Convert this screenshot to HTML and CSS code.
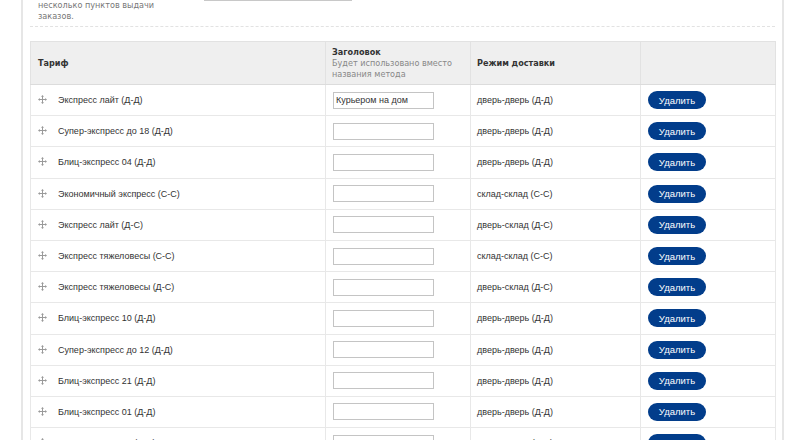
FILE: index.html
```html
<!DOCTYPE html>
<html lang="ru">
<head>
<meta charset="utf-8">
<title>Тарифы</title>
<link rel="stylesheet" href="styles.css">
</head>
<body>
<div class="panel">
  <div class="field-row">
    <div class="field-label">несколько пунктов выдачи<br>заказов.</div>
    <div class="field-control"><input class="top-input" type="text"></div>
  </div>
  <table class="tariffs">
    <colgroup>
      <col class="c1"><col class="c2"><col class="c3"><col class="c4">
    </colgroup>
    <thead>
      <tr>
        <th class="th-name">Тариф</th>
        <th class="th-title">Заголовок<span class="hint">Будет использовано вместо названия метода</span></th>
        <th class="th-mode">Режим доставки</th>
        <th class="th-act"></th>
      </tr>
    </thead>
    <tbody id="rows">
      <tr><td class="name"><span class="drag"><svg viewBox="0 0 9 9"><path d="M4.5 1v7M1 4.5h7"/><path class="hd" d="M4.5 0L3 1.8h3zM4.5 9L3 7.2h3zM0 4.5L1.8 3v3zM9 4.5L7.2 3v3z"/></svg></span>Экспресс лайт (Д-Д)</td><td class="title"><input class="cell-input" type="text" value="Курьером на дом"></td><td class="mode">дверь-дверь (Д-Д)</td><td class="act"><button class="del">Удалить</button></td></tr>
      <tr><td class="name"><span class="drag"><svg viewBox="0 0 9 9"><path d="M4.5 1v7M1 4.5h7"/><path class="hd" d="M4.5 0L3 1.8h3zM4.5 9L3 7.2h3zM0 4.5L1.8 3v3zM9 4.5L7.2 3v3z"/></svg></span>Супер-экспресс до 18 (Д-Д)</td><td class="title"><input class="cell-input" type="text"></td><td class="mode">дверь-дверь (Д-Д)</td><td class="act"><button class="del">Удалить</button></td></tr>
      <tr><td class="name"><span class="drag"><svg viewBox="0 0 9 9"><path d="M4.5 1v7M1 4.5h7"/><path class="hd" d="M4.5 0L3 1.8h3zM4.5 9L3 7.2h3zM0 4.5L1.8 3v3zM9 4.5L7.2 3v3z"/></svg></span>Блиц-экспресс 04 (Д-Д)</td><td class="title"><input class="cell-input" type="text"></td><td class="mode">дверь-дверь (Д-Д)</td><td class="act"><button class="del">Удалить</button></td></tr>
      <tr><td class="name"><span class="drag"><svg viewBox="0 0 9 9"><path d="M4.5 1v7M1 4.5h7"/><path class="hd" d="M4.5 0L3 1.8h3zM4.5 9L3 7.2h3zM0 4.5L1.8 3v3zM9 4.5L7.2 3v3z"/></svg></span>Экономичный экспресс (С-С)</td><td class="title"><input class="cell-input" type="text"></td><td class="mode">склад-склад (С-С)</td><td class="act"><button class="del">Удалить</button></td></tr>
      <tr><td class="name"><span class="drag"><svg viewBox="0 0 9 9"><path d="M4.5 1v7M1 4.5h7"/><path class="hd" d="M4.5 0L3 1.8h3zM4.5 9L3 7.2h3zM0 4.5L1.8 3v3zM9 4.5L7.2 3v3z"/></svg></span>Экспресс лайт (Д-С)</td><td class="title"><input class="cell-input" type="text"></td><td class="mode">дверь-склад (Д-С)</td><td class="act"><button class="del">Удалить</button></td></tr>
      <tr><td class="name"><span class="drag"><svg viewBox="0 0 9 9"><path d="M4.5 1v7M1 4.5h7"/><path class="hd" d="M4.5 0L3 1.8h3zM4.5 9L3 7.2h3zM0 4.5L1.8 3v3zM9 4.5L7.2 3v3z"/></svg></span>Экспресс тяжеловесы (С-С)</td><td class="title"><input class="cell-input" type="text"></td><td class="mode">склад-склад (С-С)</td><td class="act"><button class="del">Удалить</button></td></tr>
      <tr><td class="name"><span class="drag"><svg viewBox="0 0 9 9"><path d="M4.5 1v7M1 4.5h7"/><path class="hd" d="M4.5 0L3 1.8h3zM4.5 9L3 7.2h3zM0 4.5L1.8 3v3zM9 4.5L7.2 3v3z"/></svg></span>Экспресс тяжеловесы (Д-С)</td><td class="title"><input class="cell-input" type="text"></td><td class="mode">дверь-склад (Д-С)</td><td class="act"><button class="del">Удалить</button></td></tr>
      <tr><td class="name"><span class="drag"><svg viewBox="0 0 9 9"><path d="M4.5 1v7M1 4.5h7"/><path class="hd" d="M4.5 0L3 1.8h3zM4.5 9L3 7.2h3zM0 4.5L1.8 3v3zM9 4.5L7.2 3v3z"/></svg></span>Блиц-экспресс 10 (Д-Д)</td><td class="title"><input class="cell-input" type="text"></td><td class="mode">дверь-дверь (Д-Д)</td><td class="act"><button class="del">Удалить</button></td></tr>
      <tr><td class="name"><span class="drag"><svg viewBox="0 0 9 9"><path d="M4.5 1v7M1 4.5h7"/><path class="hd" d="M4.5 0L3 1.8h3zM4.5 9L3 7.2h3zM0 4.5L1.8 3v3zM9 4.5L7.2 3v3z"/></svg></span>Супер-экспресс до 12 (Д-Д)</td><td class="title"><input class="cell-input" type="text"></td><td class="mode">дверь-дверь (Д-Д)</td><td class="act"><button class="del">Удалить</button></td></tr>
      <tr><td class="name"><span class="drag"><svg viewBox="0 0 9 9"><path d="M4.5 1v7M1 4.5h7"/><path class="hd" d="M4.5 0L3 1.8h3zM4.5 9L3 7.2h3zM0 4.5L1.8 3v3zM9 4.5L7.2 3v3z"/></svg></span>Блиц-экспресс 21 (Д-Д)</td><td class="title"><input class="cell-input" type="text"></td><td class="mode">дверь-дверь (Д-Д)</td><td class="act"><button class="del">Удалить</button></td></tr>
      <tr><td class="name"><span class="drag"><svg viewBox="0 0 9 9"><path d="M4.5 1v7M1 4.5h7"/><path class="hd" d="M4.5 0L3 1.8h3zM4.5 9L3 7.2h3zM0 4.5L1.8 3v3zM9 4.5L7.2 3v3z"/></svg></span>Блиц-экспресс 01 (Д-Д)</td><td class="title"><input class="cell-input" type="text"></td><td class="mode">дверь-дверь (Д-Д)</td><td class="act"><button class="del">Удалить</button></td></tr>
      <tr><td class="name"><span class="drag"><svg viewBox="0 0 9 9"><path d="M4.5 1v7M1 4.5h7"/><path class="hd" d="M4.5 0L3 1.8h3zM4.5 9L3 7.2h3zM0 4.5L1.8 3v3zM9 4.5L7.2 3v3z"/></svg></span>Блиц-экспресс 02 (Д-Д)</td><td class="title"><input class="cell-input" type="text"></td><td class="mode">дверь-дверь (Д-Д)</td><td class="act"><button class="del">Удалить</button></td></tr>
    </tbody>
  </table>
</div>
</body>
</html>
```
FILE: styles.css
```css
html, body {
  margin: 0;
  padding: 0;
  background: #fff;
  overflow: hidden;
}
body {
  font-family: "Liberation Sans", Arial, sans-serif;
  color: #333;
}
.panel {
  margin-left: 21px;
  border-left: 2px solid #e6e6e6;
  border-right: 2px solid #e6e6e6;
  padding: 0 7px;
  box-sizing: content-box;
  width: 745px;
  min-height: 460px;
}
.field-row {
  display: flex;
  align-items: flex-start;
  border-bottom: 1px dashed #e2e2e2;
  box-sizing: border-box;
  height: 27px;
}
.field-label {
  font-family: "DejaVu Sans Condensed", "DejaVu Sans", sans-serif;
  font-size: 9px;
  line-height: 11px;
  color: #777;
  width: 166px;
  padding-left: 8px;
  padding-top: 0;
}
.field-control {
  margin-top: -19px;
}
.top-input {
  display: block;
  width: 148px;
  height: 20px;
  box-sizing: border-box;
  border: 1px solid #c8c8c8;
  background: #fff;
  margin: 0;
}
.tariffs {
  margin-top: 14px;
  width: 745px;
  border-collapse: collapse;
  table-layout: fixed;
  border: 1px solid #e2e2e2;
}
.c1 { width: 295px; }
.c2 { width: 145px; }
.c3 { width: 170px; }
.c4 { width: 135px; }
.tariffs th {
  background: #efefef;
  height: 42px;
  padding: 0 6px;
  text-align: left;
  vertical-align: middle;
  font-family: "DejaVu Sans Condensed", "DejaVu Sans", sans-serif;
  font-size: 9px;
  font-weight: bold;
  line-height: 11px;
  color: #333;
  border: 1px solid #e2e2e2;
  border-bottom-color: #dcdcdc;
}
.tariffs th.th-name { padding-left: 7px; }
.hint {
  display: block;
  font-weight: normal;
  color: #888;
}
.tariffs td {
  height: 30.2px;
  padding: 0 6px;
  vertical-align: middle;
  font-size: 9px;
  color: #333;
  border: 1px solid #e8e8e8;
  white-space: nowrap;
}
.tariffs td.name {
  padding-left: 7px;
}
.drag {
  display: inline-block;
  width: 9px;
  height: 9px;
  margin-right: 11px;
  vertical-align: -1px;
}
.drag svg {
  display: block;
  width: 9px;
  height: 9px;
}
.drag path {
  stroke: #9a9a9a;
  stroke-width: 1;
  fill: none;
}
.drag path.hd {
  fill: #9a9a9a;
  stroke: none;
}
.cell-input {
  display: block;
  width: 101px;
  height: 17px;
  box-sizing: border-box;
  margin-left: 1px;
  border: 1px solid #c4c4c4;
  padding: 0 2px;
  font-family: "Liberation Sans", Arial, sans-serif;
  font-size: 9px;
  color: #333;
  background: #fff;
}
.tariffs td.act {
  padding-left: 7px;
}
.del {
  display: block;
  width: 58px;
  height: 18px;
  border: 0;
  border-radius: 9px;
  background: #023d8b;
  color: #fff;
  font-family: "Liberation Sans", Arial, sans-serif;
  font-size: 9.5px;
  padding: 0;
  cursor: pointer;
}
```
